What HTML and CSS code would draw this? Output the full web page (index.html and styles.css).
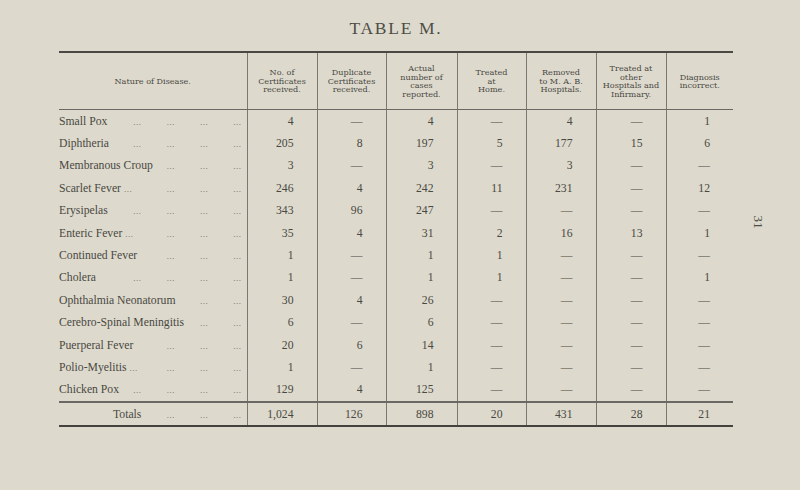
FILE: index.html
```html
<!DOCTYPE html>
<html>
<head>
<meta charset="utf-8">
<link rel="stylesheet" href="styles.css">
</head>
<body>
<div class="page">
  <h1 class="title">TABLE M.</h1>
  <table class="stats">
    <colgroup>
      <col class="c-label"><col class="c1"><col class="c2"><col class="c3"><col class="c4"><col class="c5"><col class="c6"><col class="c7">
    </colgroup>
    <thead>
      <tr>
        <th class="h-label">Nature of Disease.</th>
        <th>No. of<br>Certificates<br>received.</th>
        <th>Duplicate<br>Certificates<br>received.</th>
        <th>Actual<br>number of<br>cases<br>reported.</th>
        <th>Treated<br>at<br>Home.</th>
        <th>Removed<br>to M. A. B.<br>Hospitals.</th>
        <th>Treated at<br>other<br>Hospitals and<br>Infirmary.</th>
        <th>Diagnosis<br>incorrect.</th>
      </tr>
    </thead>
    <tbody>
      <tr><td class="label"><div class="lbl"><span class="name">Small Pox</span><span class="lead"><i>...</i><i>...</i><i>...</i><i>...</i></span></div></td><td>4</td><td>—</td><td>4</td><td>—</td><td>4</td><td>—</td><td>1</td></tr>
      <tr><td class="label"><div class="lbl"><span class="name">Diphtheria</span><span class="lead"><i>...</i><i>...</i><i>...</i><i>...</i></span></div></td><td>205</td><td>8</td><td>197</td><td>5</td><td>177</td><td>15</td><td>6</td></tr>
      <tr><td class="label"><div class="lbl"><span class="name">Membranous Croup</span><span class="lead"><i>...</i><i>...</i><i>...</i></span></div></td><td>3</td><td>—</td><td>3</td><td>—</td><td>3</td><td>—</td><td>—</td></tr>
      <tr><td class="label"><div class="lbl"><span class="name">Scarlet Fever <b>...</b></span><span class="lead"><i>...</i><i>...</i><i>...</i></span></div></td><td>246</td><td>4</td><td>242</td><td>11</td><td>231</td><td>—</td><td>12</td></tr>
      <tr><td class="label"><div class="lbl"><span class="name">Erysipelas</span><span class="lead"><i>...</i><i>...</i><i>...</i><i>...</i></span></div></td><td>343</td><td>96</td><td>247</td><td>—</td><td>—</td><td>—</td><td>—</td></tr>
      <tr><td class="label"><div class="lbl"><span class="name">Enteric Fever <b>...</b></span><span class="lead"><i>...</i><i>...</i><i>...</i></span></div></td><td>35</td><td>4</td><td>31</td><td>2</td><td>16</td><td>13</td><td>1</td></tr>
      <tr><td class="label"><div class="lbl"><span class="name">Continued Fever</span><span class="lead"><i>...</i><i>...</i><i>...</i></span></div></td><td>1</td><td>—</td><td>1</td><td>1</td><td>—</td><td>—</td><td>—</td></tr>
      <tr><td class="label"><div class="lbl"><span class="name">Cholera</span><span class="lead"><i>...</i><i>...</i><i>...</i><i>...</i></span></div></td><td>1</td><td>—</td><td>1</td><td>1</td><td>—</td><td>—</td><td>1</td></tr>
      <tr><td class="label"><div class="lbl"><span class="name">Ophthalmia Neonatorum</span><span class="lead"><i>...</i><i>...</i></span></div></td><td>30</td><td>4</td><td>26</td><td>—</td><td>—</td><td>—</td><td>—</td></tr>
      <tr><td class="label"><div class="lbl"><span class="name">Cerebro-Spinal Meningitis</span><span class="lead"><i>...</i><i>...</i></span></div></td><td>6</td><td>—</td><td>6</td><td>—</td><td>—</td><td>—</td><td>—</td></tr>
      <tr><td class="label"><div class="lbl"><span class="name">Puerperal Fever</span><span class="lead"><i>...</i><i>...</i><i>...</i></span></div></td><td>20</td><td>6</td><td>14</td><td>—</td><td>—</td><td>—</td><td>—</td></tr>
      <tr><td class="label"><div class="lbl"><span class="name">Polio-Myelitis <b>...</b></span><span class="lead"><i>...</i><i>...</i><i>...</i></span></div></td><td>1</td><td>—</td><td>1</td><td>—</td><td>—</td><td>—</td><td>—</td></tr>
      <tr><td class="label"><div class="lbl"><span class="name">Chicken Pox</span><span class="lead"><i>...</i><i>...</i><i>...</i><i>...</i></span></div></td><td>129</td><td>4</td><td>125</td><td>—</td><td>—</td><td>—</td><td>—</td></tr>
    </tbody>
    <tfoot>
      <tr><td class="label"><div class="lbl total"><span class="name">Totals</span><span class="lead"><i>...</i><i>...</i><i>...</i></span></div></td><td>1,024</td><td>126</td><td>898</td><td>20</td><td>431</td><td>28</td><td>21</td></tr>
    </tfoot>
  </table>
  <div class="folio">31</div>
</div>
</body>
</html>
```
FILE: styles.css
```css
html, body {
  margin: 0;
  padding: 0;
  background: #dddacd;
}
body {
  font-family: "Liberation Serif", "Times New Roman", serif;
  color: #4a4842;
}
.page {
  position: relative;
  width: 800px;
  height: 490px;
  padding: 18px 0 0 59px;
  box-sizing: border-box;
}
.title {
  width: 674px;
  margin: 0 0 13px 0;
  font-size: 17.5px;
  line-height: 20px;
  font-weight: normal;
  letter-spacing: 1.7px;
  text-align: center;
  color: #4f4d47;
}
.stats {
  width: 674px;
  border-collapse: collapse;
  table-layout: fixed;
  font-size: 11.7px;
}
.c-label { width: 188px; }
.c1 { width: 70px; }
.c2 { width: 69px; }
.c3 { width: 71px; }
.c4 { width: 69px; }
.c5 { width: 70px; }
.c6 { width: 70px; }
.c7 { width: 67px; }

.stats th {
  height: 56px;
  padding: 0 1px;
  font-family: "DejaVu Serif", "Liberation Serif", serif;
  font-size: 8.1px;
  line-height: 8.5px;
  font-weight: normal;
  text-align: center;
  vertical-align: middle;
  color: #4a4843;
  border-top: 2px solid #4a4843;
  border-bottom: 1px solid #6a6862;
  border-left: 1px solid #7a7870;
}
.stats th.h-label {
  border-left: none;
  padding: 0;
}
.stats td {
  height: 22.4px;
  padding: 0 23px 0 0;
  text-align: right;
  vertical-align: middle;
  border-left: 1px solid #7a7870;
  white-space: nowrap;
}
.stats td.label {
  border-left: none;
  padding: 0 3px 0 0;
  text-align: left;
}
.lbl {
  display: flex;
  align-items: baseline;
}
.lbl .name {
  flex: 1 1 auto;
  min-width: 0;
  white-space: nowrap;
}
.lbl .name b {
  font-weight: normal;
  font-size: 9px;
  letter-spacing: 0.5px;
  color: #67655e;
}
.lbl .lead {
  flex: 0 0 auto;
  display: flex;
}
.lbl .lead i {
  display: block;
  flex: 0 0 33.3px;
  width: 33.3px;
  padding-right: 2px;
  box-sizing: border-box;
  text-align: right;
  font-style: normal;
  font-size: 9px;
  letter-spacing: 0.5px;
  color: #67655e;
}
.lbl.total .name {
  padding-left: 54px;
}
.stats tfoot td {
  height: 22px;
  border-top: 2px solid #6a6862;
  border-bottom: 2px solid #44423d;
}
.folio {
  position: absolute;
  left: 749px;
  top: 214px;
  width: 18px;
  font-size: 13.5px;
  line-height: 16px;
  text-align: center;
  transform: rotate(90deg);
  color: #4f4d47;
}
```
